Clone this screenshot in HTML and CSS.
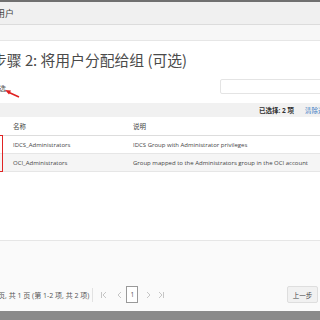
FILE: index.html
```html
<!DOCTYPE html>
<html lang="zh">
<head>
    <meta charset="UTF-8">
    <meta name="viewport" content="width=device-width, initial-scale=1.0">
    <title>用户</title>
    <link rel="stylesheet" href="styles.css">
</head>
<body>
    <div class="page">
        <div class="topline"></div>
        <div class="header"><span class="header-title">用户</span></div>
        <div class="subbar"></div>

        <div class="main">
            <h1 class="title">步骤 2: 将用户分配给组 (可选)</h1>

            <div class="filter-row">
                <span class="filter-label">选</span>
                <div class="search-box"></div>
            </div>

            <div class="toolbar">
                <span class="selected">已选择: 2 项</span>
                <span class="clear-link">清除选择</span>
            </div>

            <div class="table">
                <div class="row head">
                    <div class="cell name">名称</div>
                    <div class="cell desc">说明</div>
                </div>
                <div class="row">
                    <div class="cell name">IDCS_Administrators</div>
                    <div class="cell desc">IDCS Group with Administrator privileges</div>
                </div>
                <div class="row alt">
                    <div class="cell name">OCI_Administrators</div>
                    <div class="cell desc">Group mapped to the Administrators group in the OCI account</div>
                </div>
            </div>
        </div>

        <div class="footer">
            <div class="pager">
                <span class="pager-info">页, 共 1 页 (第 1-2 项, 共 2 项)</span>
                <span class="pager-sep"></span>
                <svg class="pager-btn first" width="8" height="8" viewBox="0 0 8 8">
                    <path d="M1.5 1 V7 M6 1 L3 4 L6 7" stroke="#c6c6c6" stroke-width="1" fill="none"/>
                </svg>
                <svg class="pager-btn prev" width="8" height="8" viewBox="0 0 8 8">
                    <path d="M5 1 L2 4 L5 7" stroke="#c6c6c6" stroke-width="1" fill="none"/>
                </svg>
                <span class="pager-page">1</span>
                <svg class="pager-btn next" width="8" height="8" viewBox="0 0 8 8">
                    <path d="M3 1 L6 4 L3 7" stroke="#c6c6c6" stroke-width="1" fill="none"/>
                </svg>
                <svg class="pager-btn last" width="8" height="8" viewBox="0 0 8 8">
                    <path d="M2 1 L5 4 L2 7 M6.5 1 V7" stroke="#c6c6c6" stroke-width="1" fill="none"/>
                </svg>
            </div>
            <button class="back-btn">上一步</button>
        </div>
        <div class="bottombar"></div>

        <!-- annotations drawn over the screenshot -->
        <svg class="arrow" width="24" height="14" viewBox="0 0 24 14">
            <path d="M19 10 L8 5" stroke="#e02020" stroke-width="1.6" fill="none"/>
            <path d="M5 3 L11 3.5 L9 7.5 Z" fill="#e02020"/>
        </svg>
        <div class="red-box"></div>
    </div>
</body>
</html>
```

FILE: styles.css
```css
body {
    margin: 0;
    font-family: "Open Sans", "Noto Sans CJK SC", sans-serif;
    color: #333;
}
.page {
    position: relative;
    width: 320px;
    height: 320px;
    overflow: hidden;
    display: flex;
    flex-direction: column;
    background-color: #fff;
}
.topline {
    height: 2px;
    background-color: #707070;
}
.header {
    height: 22px;
    background-color: #f0f0f0;
    border-bottom: 1px solid #dcdcdc;
    display: flex;
    align-items: center;
}
.header-title {
    margin-left: -4px;
    font-size: 9px;
    color: #444;
}
.subbar {
    height: 15px;
    background-color: #f7f7f7;
    border-bottom: 1px solid #e6e6e6;
}
.main {
    height: 190px;
    padding-top: 9px;
}
.title {
    margin: 0 0 0 -8px;
    font-family: "Noto Sans CJK SC", "Open Sans", sans-serif;
    font-size: 14.8px;
    line-height: 20px;
    font-weight: normal;
    color: #4a4a4a;
    white-space: nowrap;
}
.filter-row {
    margin-top: 9px;
    height: 14px;
    display: flex;
    align-items: center;
    justify-content: space-between;
}
.filter-label {
    margin-left: -1px;
    margin-top: 3px;
    font-size: 7px;
    color: #555;
}
.search-box {
    width: 104px;
    height: 13px;
    margin-right: -6px;
    border: 1px solid #e4e4e4;
    border-radius: 2px;
    background-color: #fff;
}
.toolbar {
    margin-top: 10px;
    height: 14px;
    background-color: #f1f1f1;
    display: flex;
    align-items: center;
    justify-content: flex-end;
    gap: 11px;
    font-size: 6.5px;
    white-space: nowrap;
}
.selected {
    color: #333;
    font-weight: bold;
}
.clear-link {
    color: #3d7cc4;
    margin-right: -11px;
}
.row {
    display: flex;
    height: 17px;
    align-items: center;
    border-bottom: 1px solid #e6e6e6;
    font-size: 6px;
    color: #444;
    white-space: nowrap;
}
.row.head {
    height: 18px;
    font-size: 6.5px;
    border-bottom-color: #dddddd;
}
.row.alt {
    background-color: #f5f5f5;
}
.cell.name {
    flex-shrink: 0;
    width: 120px;
    padding-left: 13px;
}
.footer {
    flex: 1;
    background-color: #fafafa;
    border-top: 1px solid #e6e6e6;
    display: flex;
    align-items: flex-end;
    justify-content: space-between;
    padding-bottom: 8px;
}
.pager {
    display: flex;
    align-items: center;
    height: 17px;
    margin-left: -2px;
    font-size: 7px;
    color: #555;
    white-space: nowrap;
}
.pager-sep {
    width: 1px;
    height: 14px;
    margin: 0 7px 0 3px;
    background-color: #e2e2e2;
}
.pager-btn {
    flex-shrink: 0;
}
.pager-btn.first {
    margin-right: 8px;
}
.pager-btn.prev {
    margin-right: 2px;
}
.pager-page {
    width: 10px;
    height: 15px;
    border: 1px solid #999;
    display: flex;
    align-items: center;
    justify-content: center;
    margin-right: 6px;
    font-size: 6.5px;
    background-color: #fff;
}
.pager-btn.next {
    margin-right: 5px;
}
.back-btn {
    margin-right: 2px;
    height: 17px;
    width: 31px;
    padding: 0;
    font-family: "Noto Sans CJK SC", sans-serif;
    font-size: 6.5px;
    color: #444;
    background-color: #f1f1f1;
    border: 1px solid #dedede;
    border-radius: 2px;
}
.bottombar {
    height: 9px;
    background-color: #8a8a8a;
}
.arrow {
    position: absolute;
    left: 0;
    top: 87px;
}
.red-box {
    position: absolute;
    left: -20px;
    top: 135px;
    width: 21px;
    height: 35px;
    border: 1px solid #e02424;
}
```
